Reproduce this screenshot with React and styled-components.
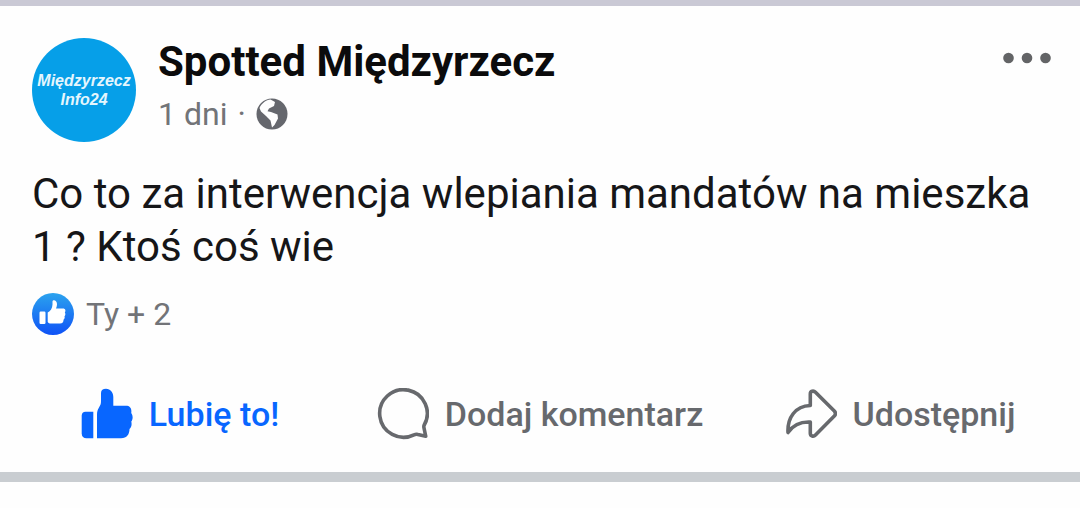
import React from 'react';
import styled, { createGlobalStyle } from 'styled-components';

const GlobalStyle = createGlobalStyle`
  body {
    margin: 0;
    background: #fefefe;
    font-family: Roboto, 'Liberation Sans', sans-serif;
  }
`;

const Post = styled.article`
  padding: 32px 29px 32px 32px;
  border-top: 6px solid #cac9d5;
  border-bottom: 10px solid #c9cdd1;
  background: #fefefe;
`;

const Header = styled.header`
  display: flex;
  align-items: flex-start;
  gap: 22px;
`;

const Avatar = styled.a`
  display: flex;
  flex-shrink: 0;
  align-items: center;
  justify-content: center;
  width: 104px;
  height: 104px;
  border-radius: 50%;
  background: #069fe8;
  color: #e4f6fd;
  font: italic bold 16px/19px 'Liberation Sans', Arial, sans-serif;
  text-align: center;
  text-decoration: none;
`;

const HeaderText = styled.div`
  flex: 1;
`;

const PageName = styled.h1`
  margin: 0;
  color: #0b0b0c;
  font-size: 42px;
  font-weight: 700;
  line-height: 48px;
`;

const Meta = styled.div`
  display: flex;
  align-items: center;
  gap: 10px;
  margin-top: 8px;
  color: #727478;
  font-size: 32px;
  line-height: 40px;
`;

const Button = styled.button`
  display: flex;
  align-items: center;
  justify-content: center;
  padding: 0;
  border: 0;
  background: none;
  font-family: inherit;
  cursor: pointer;
`;

const MenuButton = styled(Button)`
  height: 40px;
  color: #636466;
`;

const Message = styled.p`
  margin: 25px 0 0;
  color: #161618;
  font-size: 42px;
  line-height: 53px;
`;

const Reactions = styled.div`
  display: flex;
  align-items: center;
  gap: 12px;
  margin-top: 20px;
  color: #727478;
  font-size: 32px;
  line-height: 42px;
`;

const Actions = styled.footer`
  display: grid;
  grid-template-columns: repeat(3, 1fr);
  margin: 53px -29px 0 -32px;
`;

const ActionButton = styled(Button)`
  gap: 16px;
  color: ${({ $active }) => ($active ? '#0866ff' : '#67696d')};
  font-size: 34px;
  font-weight: 500;
  line-height: 52px;
`;

const GlobeIcon = () => (
  <svg width="32" height="32" viewBox="0 0 32 32" aria-hidden="true">
    <circle cx="16" cy="16" r="15.5" fill="#65676d" />
    <path
      d="M3.5 10C6 5 10 2 14.5 1.6L19 4L18 8L13 10.5L11.5 13.2L15 14L21.5 16.5L22 20.5L18.5 27L16 29.5L14.5 22.5L10 18L5 13.5Z"
      fill="#fefefe"
    />
  </svg>
);

const DotsIcon = () => (
  <svg width="48" height="12" viewBox="0 0 48 12" fill="currentColor" aria-hidden="true">
    <circle cx="5.5" cy="6" r="5.3" />
    <circle cx="24" cy="6" r="5.3" />
    <circle cx="42.5" cy="6" r="5.3" />
  </svg>
);

const LikeBadge = () => (
  <svg width="42" height="42" viewBox="0 0 42 42" aria-hidden="true">
    <defs>
      <linearGradient id="like-gradient" x1="0" y1="0" x2="0" y2="1">
        <stop offset="0" stopColor="#2ba3ee" />
        <stop offset="1" stopColor="#0f52f6" />
      </linearGradient>
    </defs>
    <circle cx="21" cy="21" r="21" fill="url(#like-gradient)" />
    <rect x="7.5" y="18.5" width="6" height="12.5" rx="1.2" fill="#fff" />
    <path
      d="M15.7 19.5C18.5 18 20.3 15.5 20.5 11.5V8.5C20.5 6.5 24.8 6.3 25 11C25 12.5 24.5 14.5 24 15.5H31C33.6 15.5 34 18 32.8 19.5C33.8 20.8 33.4 22.5 32.5 23.3C33 24.8 32.5 26 31.5 26.8C31.7 29 30.5 30.5 28 30.5H19C17.5 30.5 16.5 30 15.7 29Z"
      fill="#fff"
    />
  </svg>
);

const LikeIcon = () => (
  <svg width="52" height="52" viewBox="0 0 52 52" fill="currentColor" aria-hidden="true">
    <path d="M4.5 23.7H12.3V50.3H5.5C2.5 50.3 .7 48.5 .7 45.5V27.5C.7 25 2.2 23.7 4.5 23.7Z" />
    <path d="M16 27C16 23.5 16.5 22 18 19.5C19.5 17 20 16 20 13V5C20 2 22 .8 25 .8C29.5 .8 32.3 4.5 32.3 9V17.8H45C49 17.8 51 20.5 50.2 25C52 27.5 52.2 31 50.3 33.5C51 36.5 50.5 39 48.5 41C48.5 46 46 50.3 40 50.3H16Z" />
  </svg>
);

const CommentIcon = () => (
  <svg width="52" height="52" viewBox="0 0 52 52" fill="none" stroke="currentColor" strokeWidth="3.6" strokeLinejoin="round" aria-hidden="true">
    <path d="M47 37.5Q46.7 38.5 47 40L48.7 48.2L41 46.5Q39 46 37 46.8A23.8 23.8 0 1 1 47 37.5Z" />
  </svg>
);

const ShareIcon = () => (
  <svg width="52" height="52" viewBox="0 0 52 52" fill="none" stroke="currentColor" strokeWidth="3.6" strokeLinejoin="round" aria-hidden="true">
    <path d="M25.3 17.5V6C25.3 3 28.5 2.3 30.5 4.3L49.3 23C50.7 24.5 50.7 26.5 49.3 28L30.5 47C28.5 49 25.3 48.2 25.3 45.2V34C14.5 33.5 8 37 3 44.5C2.3 30 10 18 25.3 17.5Z" />
  </svg>
);

const actions = [
  { label: 'Lubię to!', Icon: LikeIcon, active: true },
  { label: 'Dodaj komentarz', Icon: CommentIcon },
  { label: 'Udostępnij', Icon: ShareIcon },
];

const App = () => (
  <>
    <GlobalStyle />
    <Post>
      <Header>
        <Avatar href="#">
          Międzyrzecz
          <br />
          Info24
        </Avatar>
        <HeaderText>
          <PageName>Spotted Międzyrzecz</PageName>
          <Meta>
            <span>1 dni</span>
            <span>·</span>
            <GlobeIcon />
          </Meta>
        </HeaderText>
        <MenuButton type="button" aria-label="Menu">
          <DotsIcon />
        </MenuButton>
      </Header>
      <Message>Co to za interwencja wlepiania mandatów na mieszka 1 ? Ktoś coś wie</Message>
      <Reactions>
        <LikeBadge />
        <span>Ty + 2</span>
      </Reactions>
      <Actions>
        {actions.map(({ label, Icon, active }) => (
          <ActionButton key={label} type="button" $active={active}>
            <Icon />
            {label}
          </ActionButton>
        ))}
      </Actions>
    </Post>
  </>
);

export default App;
